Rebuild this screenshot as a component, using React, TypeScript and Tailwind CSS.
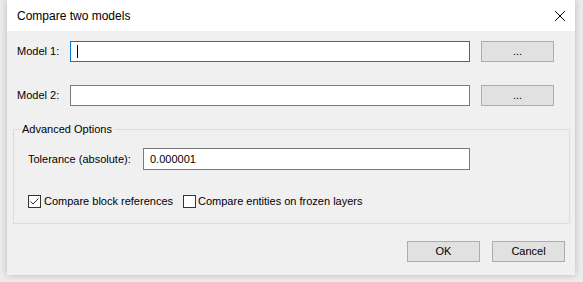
import React from "react";

const font = { fontFamily: '"Liberation Sans", Arial, sans-serif' };

const Btn = ({ label, w }: { label: string; w: string }) => (
  <div className={`${w} h-[21px] bg-[#e1e1e1] border border-[#adadad] flex items-center justify-center text-[11px] text-black`}>
    {label}
  </div>
);

const Check = ({ checked }: { checked: boolean }) => (
  <div className="w-[13px] h-[13px] border border-[#333333] bg-white flex items-center justify-center shrink-0">
    {checked && (
      <svg width="11" height="11" viewBox="0 0 11 11">
        <path d="M1.5 5.5 L4 8 L9.5 2.5" fill="none" stroke="#333333" strokeWidth="1" />
      </svg>
    )}
  </div>
);

export default function App() {
  return (
    <div className="w-[583px] h-[282px] bg-[#ececec] overflow-hidden" style={font}>
      <div className="ml-[7px] w-[568px] h-[275px] bg-[#f0f0f0] flex flex-col shadow-[0_0_7px_rgba(0,0,0,0.22)]">
        {/* title bar */}
        <div className="h-[31px] bg-white flex items-center justify-between pl-[10px] pr-[10px] shrink-0">
          <span className="text-[12px] text-black whitespace-nowrap">Compare two models</span>
          <svg width="10" height="10" viewBox="0 0 10 10">
            <path d="M0 0 L10 10 M10 0 L0 10" stroke="#000" strokeWidth="1" />
          </svg>
        </div>

        <div className="flex items-center h-[21px] mt-[10px] pl-[10px]">
          <span className="w-[53px] text-[11px] text-black whitespace-nowrap">Model 1:</span>
          <div className="w-[400px] h-[21px] bg-white border border-[#0078d7] flex items-center pl-[6px]">
            <div className="w-px h-[13px] bg-black" />
          </div>
          <div className="ml-[11px]">
            <Btn label="..." w="w-[73px]" />
          </div>
        </div>

        <div className="flex items-center h-[21px] mt-[23px] pl-[10px]">
          <span className="w-[53px] text-[11px] text-black whitespace-nowrap">Model 2:</span>
          <div className="w-[400px] h-[21px] bg-white border border-[#7a7a7a]" />
          <div className="ml-[11px]">
            <Btn label="..." w="w-[73px]" />
          </div>
        </div>

        <fieldset className="ml-[6px] mt-[15px] w-[557px] border border-[#dcdcdc] pb-[15px]">
          <legend className="ml-[6px] px-[2px] text-[11px] leading-[16px] text-black whitespace-nowrap">Advanced Options</legend>
          <div className="flex items-center mt-[11px] pl-[14px] h-[22px]">
            <span className="w-[115px] text-[11px] text-black whitespace-nowrap">Tolerance (absolute):</span>
            <div className="w-[327px] h-[22px] bg-white border border-[#7a7a7a] flex items-center pl-[6px] text-[11px] text-black">
              0.000001
            </div>
          </div>
          <div className="flex items-center mt-[25px] pl-[14px] h-[13px]">
            <Check checked />
            <span className="ml-[3px] text-[11px] text-black whitespace-nowrap">Compare block references</span>
            <div className="ml-[10px] flex items-center">
              <Check checked={false} />
              <span className="ml-[2px] text-[11px] text-black whitespace-nowrap">Compare entities on frozen layers</span>
            </div>
          </div>
        </fieldset>

        <div className="flex justify-end mt-[17px] pr-[10px] gap-[12px]">
          <Btn label="OK" w="w-[73px]" />
          <Btn label="Cancel" w="w-[73px]" />
        </div>
      </div>
    </div>
  );
}
